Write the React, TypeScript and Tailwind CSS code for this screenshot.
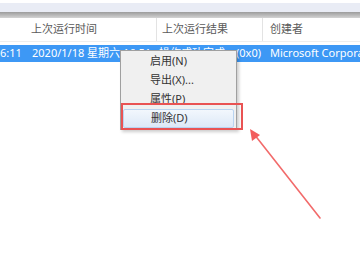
const font = "font-['Noto_Sans','Noto_Sans_CJK_SC',sans-serif]";

const menuItems = ["启用(N)", "导出(X)...", "属性(P)", "删除(D)"];

export default function App() {
  return (
    <div className={`relative w-[360px] h-[270px] overflow-hidden bg-white text-[11px] ${font}`}>
      {/* window chrome strip */}
      <div className="h-[3px] bg-white" />
      <div className="h-[9px] bg-[#e9ecf5]" />
      <div className="h-[6px] bg-gradient-to-b from-[#9c9c9c] to-[#d4d4d4]" />

      {/* column headers */}
      <div className="flex h-[24px] items-center text-[#5a5a5a] border-b border-[#eeeeee]">
        <div className="w-[157px] shrink-0 pl-[31px] border-r border-[#e3e3e3] h-full flex items-center">上次运行时间</div>
        <div className="w-[106px] shrink-0 pl-[5px] border-r border-[#e3e3e3] h-full flex items-center">上次运行结果</div>
        <div className="flex-1 pl-[7px]">创建者</div>
      </div>

      <div className="h-[3px]" />

      {/* selected row */}
      <div className="flex h-[17px] items-center bg-[#3d98f5] text-white whitespace-nowrap">
        <div className="w-[157px] shrink-0 flex">
          <span className="w-[32px] shrink-0">6:11</span>
          <span>2020/1/18 星期六 16:51</span>
        </div>
        <div className="w-[106px] shrink-0 pl-[2px]">操作成功完成。(0x0)</div>
        <div className="flex-1 pl-[7px] overflow-hidden">Microsoft Corpora</div>
      </div>

      {/* context menu */}
      <div className="absolute left-[120px] top-[50px] w-[117px] border border-[#a0a0a0] bg-[#f0f0f0] shadow-[2px_2px_3px_rgba(0,0,0,0.2)] pt-[1px] pb-[1px] text-[#333]">
        {menuItems.map((label, i) => (
          <div
            key={label}
            className={
              i === 3
                ? "mx-[2px] h-[19px] flex items-center pl-[27px] rounded-[2px] border border-[#b9d4f1] bg-gradient-to-b from-[#f2f7fd] to-[#dde9f7]"
                : "h-[19px] flex items-center pl-[29px]"
            }
          >
            {label}
          </div>
        ))}
      </div>

      {/* red highlight box */}
      <div className="absolute left-[121px] top-[103px] w-[122px] h-[27px] border-2 border-[#e95353]" />

      {/* arrow */}
      <svg className="absolute left-0 top-0" width="360" height="270" viewBox="0 0 360 270">
        <line x1="320" y1="218" x2="254" y2="134" stroke="#f26b6b" strokeWidth="1.6" strokeLinecap="round" />
        <polygon points="250,129 252,141 260,135" fill="#f25d5d" />
      </svg>
    </div>
  );
}
